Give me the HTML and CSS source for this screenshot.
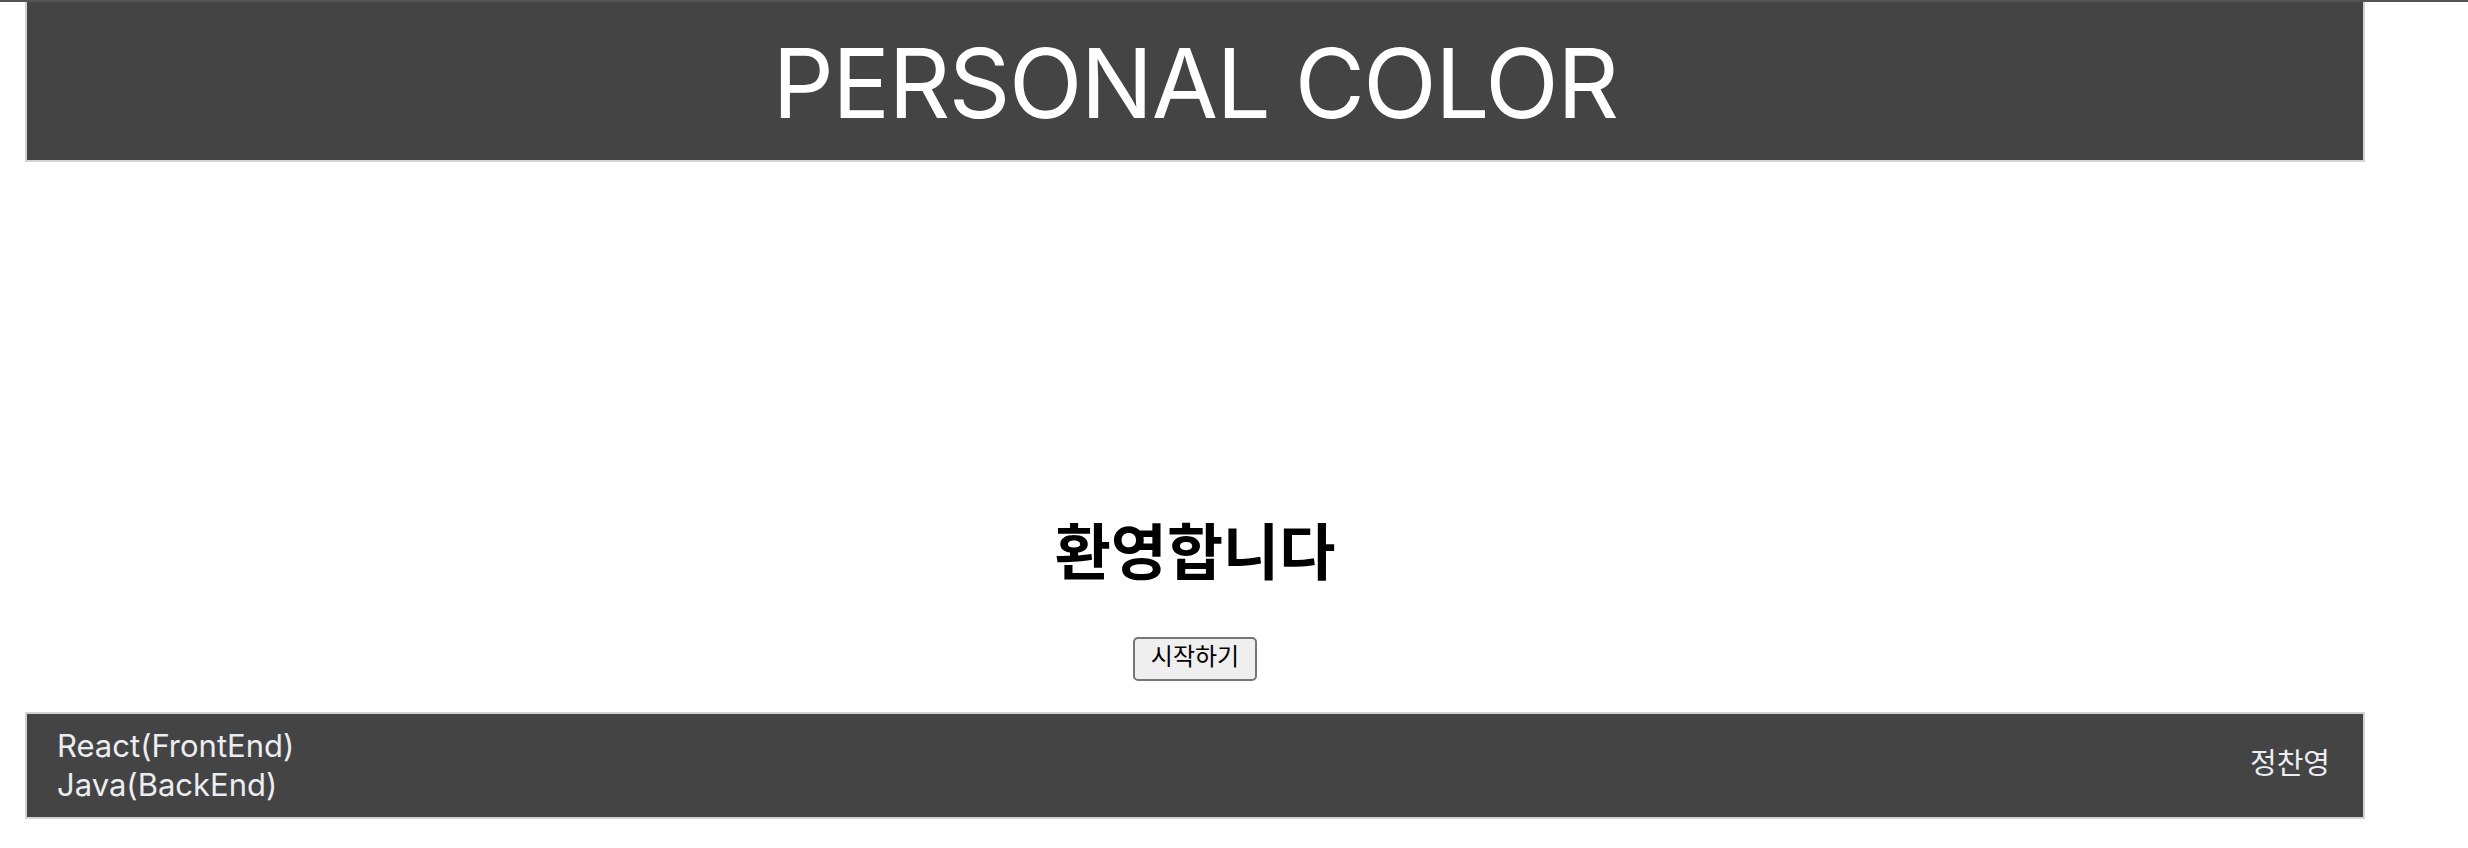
FILE: index.html
```html
<!DOCTYPE html>
<html lang="ko">
<head>
<meta charset="utf-8">
<title>PERSONAL COLOR</title>
<link rel="stylesheet" href="styles.css">
</head>
<body>
<div class="topline"></div>
<div class="page">
  <header class="header">
    <h1 class="title">PERSONAL COLOR</h1>
  </header>
  <main class="main">
    <h2 class="welcome">환영합니다</h2>
    <button class="start" type="button">시작하기</button>
  </main>
  <footer class="footer">
    <div class="stack">
      <div>React(FrontEnd)</div>
      <div>Java(BackEnd)</div>
    </div>
    <div class="author">정찬영</div>
  </footer>
</div>
</body>
</html>
```

FILE: styles.css
```css
html, body {
  margin: 0;
  padding: 0;
  background: #ffffff;
}
body {
  font-family: Inter, "Noto Sans CJK KR", sans-serif;
}
.topline {
  height: 2px;
  background: #555555;
}
.page {
  width: 2340px;
  margin-left: 25px;
}
.header {
  box-sizing: border-box;
  height: 160px;
  background: #444444;
  border: 2px solid #d3d3d3;
  border-top: none;
  padding-top: 23px;
  text-align: center;
}
.title {
  margin: 0;
  font-size: 96px;
  font-weight: 400;
  letter-spacing: -1.5px;
  line-height: 116px;
  color: #ffffff;
}
.main {
  display: flex;
  flex-direction: column;
  align-items: center;
  padding-top: 350px;
  padding-bottom: 31px;
}
.welcome {
  margin: 0 0 51px 0;
  font-family: "Noto Sans CJK KR", sans-serif;
  font-size: 61px;
  font-weight: 700;
  line-height: 74px;
  color: #000000;
}
.start {
  box-sizing: border-box;
  width: 124px;
  height: 44px;
  padding: 0 0 8px 0;
  border: 2px solid #767676;
  border-radius: 5px;
  background: #efefef;
  font-family: "Noto Sans CJK KR", sans-serif;
  font-size: 24px;
  line-height: 30px;
  color: #000000;
}
.footer {
  box-sizing: border-box;
  height: 107px;
  display: flex;
  justify-content: space-between;
  align-items: center;
  padding: 0 33px 0 30px;
  background: #444444;
  border: 2px solid #d3d3d3;
  color: #eaeef2;
  font-size: 31px;
  line-height: 38.7px;
}
.author {
  font-family: "Noto Sans CJK KR", sans-serif;
  font-size: 29px;
  padding-bottom: 8px;
}
```
